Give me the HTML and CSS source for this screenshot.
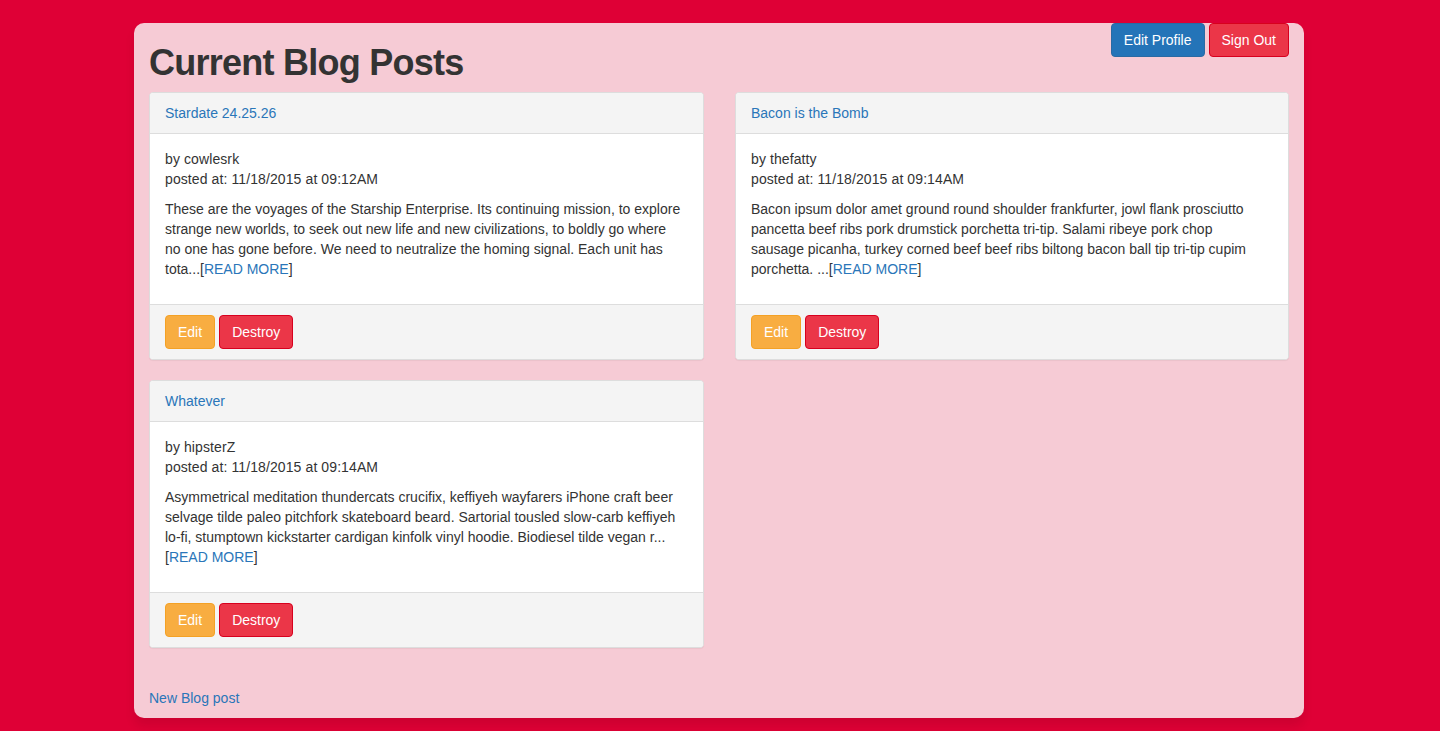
FILE: index.html
```html
<!DOCTYPE html>
<html>
<head>
<meta charset="utf-8">
<title>Current Blog Posts</title>
<link rel="stylesheet" href="styles.css">
</head>
<body>
<div class="page">
  <div class="header">
    <h1 class="title">Current Blog Posts</h1>
    <div class="user-actions">
      <a class="btn btn-primary" href="#">Edit Profile</a>
      <a class="btn btn-danger" href="#">Sign Out</a>
    </div>
  </div>

  <div class="posts">
    <div class="panel">
      <div class="panel-heading"><a href="#">Stardate 24.25.26</a></div>
      <div class="panel-body">
        <div class="meta">by cowlesrk</div>
        <div class="meta">posted at: 11/18/2015 at 09:12AM</div>
        <p class="excerpt">These are the voyages of the Starship Enterprise. Its continuing mission, to explore strange new worlds, to seek out new life and new civilizations, to boldly go where no one has gone before. We need to neutralize the homing signal. Each unit has tota...[<a href="#">READ MORE</a>]</p>
      </div>
      <div class="panel-footer">
        <a class="btn btn-warning" href="#">Edit</a>
        <a class="btn btn-danger" href="#">Destroy</a>
      </div>
    </div>

    <div class="panel">
      <div class="panel-heading"><a href="#">Bacon is the Bomb</a></div>
      <div class="panel-body">
        <div class="meta">by thefatty</div>
        <div class="meta">posted at: 11/18/2015 at 09:14AM</div>
        <p class="excerpt">Bacon ipsum dolor amet ground round shoulder frankfurter, jowl flank prosciutto pancetta beef ribs pork drumstick porchetta tri-tip. Salami ribeye pork chop sausage picanha, turkey corned beef beef ribs biltong bacon ball tip tri-tip cupim porchetta. ...[<a href="#">READ MORE</a>]</p>
      </div>
      <div class="panel-footer">
        <a class="btn btn-warning" href="#">Edit</a>
        <a class="btn btn-danger" href="#">Destroy</a>
      </div>
    </div>

    <div class="panel">
      <div class="panel-heading"><a href="#">Whatever</a></div>
      <div class="panel-body">
        <div class="meta">by hipsterZ</div>
        <div class="meta">posted at: 11/18/2015 at 09:14AM</div>
        <p class="excerpt">Asymmetrical meditation thundercats crucifix, keffiyeh wayfarers iPhone craft beer selvage tilde paleo pitchfork skateboard beard. Sartorial tousled slow-carb keffiyeh lo-fi, stumptown kickstarter cardigan kinfolk vinyl hoodie. Biodiesel tilde vegan r...[<a href="#">READ MORE</a>]</p>
      </div>
      <div class="panel-footer">
        <a class="btn btn-warning" href="#">Edit</a>
        <a class="btn btn-danger" href="#">Destroy</a>
      </div>
    </div>
  </div>

  <div class="new-post"><a href="#">New Blog post</a></div>
</div>
</body>
</html>
```
FILE: styles.css
```css
html, body {
  margin: 0;
  padding: 0;
}
body {
  background: #df0036;
  font-family: "Liberation Sans", Arial, Helvetica, sans-serif;
  font-size: 14px;
  line-height: 20px;
  color: #333333;
  padding-top: 23px;
  height: 731px;
  box-sizing: border-box;
  overflow: hidden;
}
a {
  color: #2a76b9;
  text-decoration: none;
}
.page {
  width: 1170px;
  box-sizing: border-box;
  margin-left: calc(50% - 586px);
  padding: 0 15px 10px 15px;
  background: #f6cbd5;
  border-radius: 10px;
  box-shadow: 0 8px 10px rgba(80, 0, 20, 0.12);
}
.header {
  display: flex;
  justify-content: space-between;
  align-items: flex-start;
}
.title {
  margin: 20px 0 9px 0;
  font-size: 36px;
  line-height: 1.1;
  font-weight: 700;
  letter-spacing: -0.75px;
  color: #333333;
  font-family: "Liberation Sans", Arial, Helvetica, sans-serif;
}
.user-actions {
  display: flex;
  gap: 4px;
}
.btn {
  display: inline-block;
  padding: 6px 12px;
  font-size: 14px;
  line-height: 20px;
  border: 1px solid transparent;
  border-radius: 4px;
  color: #ffffff;
}
.btn-primary {
  background: #2474b8;
  border-color: #2a6aa3;
}
.btn-danger {
  background: #eb3648;
  border-color: #d8001e;
}
.btn-warning {
  background: #f8ad41;
  border-color: #f4a125;
}
.posts {
  display: grid;
  grid-template-columns: 555px 554px;
  column-gap: 31px;
  row-gap: 20px;
  align-items: start;
}
.panel {
  background: #ffffff;
  border: 1px solid #dddddd;
  border-radius: 4px;
  box-shadow: 0 1px 1px rgba(0, 0, 0, 0.05);
}
.panel-heading {
  background: #f4f4f4;
  padding: 10px 15px;
  border-bottom: 1px solid #dddddd;
  border-radius: 3px 3px 0 0;
}
.panel-body {
  padding: 15px;
}
.meta {
  line-height: 20px;
  letter-spacing: 0.1px;
}
.excerpt {
  margin: 10px 0 10px 0;
  padding-right: 6px;
}
.panel-footer {
  background: #f4f4f4;
  border-top: 1px solid #dddddd;
  padding: 10px 15px;
  border-radius: 0 0 3px 3px;
  display: flex;
  gap: 4px;
}
.new-post {
  margin-top: 40px;
}
```
